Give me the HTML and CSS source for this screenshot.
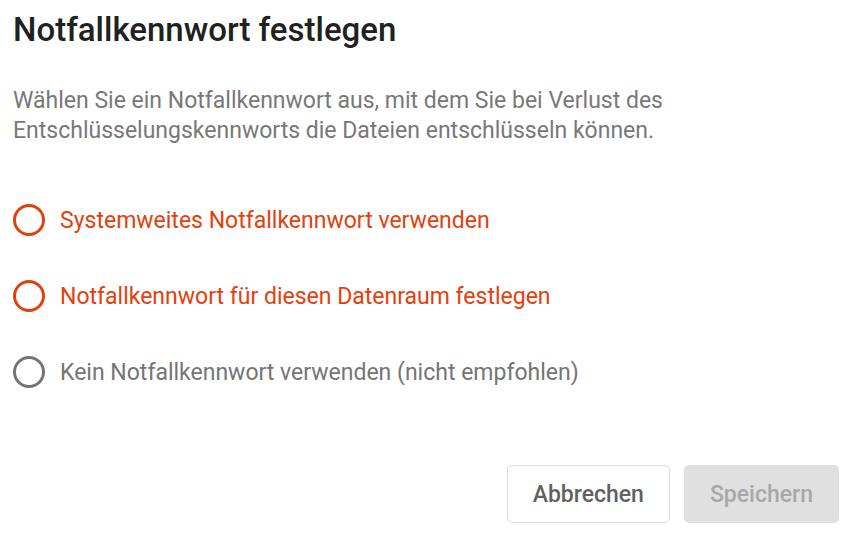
FILE: index.html
```html
<!DOCTYPE html>
<html lang="de">
<head>
    <meta charset="UTF-8">
    <title>Notfallkennwort festlegen</title>
    <link rel="stylesheet" href="styles.css">
</head>
<body>
    <div class="dialog">
        <h1>Notfallkennwort festlegen</h1>
        <p class="intro">Wählen Sie ein Notfallkennwort aus, mit dem Sie bei Verlust des Entschlüsselungskennworts die Dateien entschlüsseln können.</p>

        <div class="options">
            <label class="option active">
                <span class="radio"></span>
                Systemweites Notfallkennwort verwenden
            </label>
            <label class="option active">
                <span class="radio"></span>
                Notfallkennwort für diesen Datenraum festlegen
            </label>
            <label class="option">
                <span class="radio"></span>
                Kein Notfallkennwort verwenden (nicht empfohlen)
            </label>
        </div>

        <div class="actions">
            <button class="btn">Abbrechen</button>
            <button class="btn btn-primary" disabled>Speichern</button>
        </div>
    </div>
</body>
</html>
```

FILE: styles.css
```css
body {
    margin: 0;
    font-family: Roboto, "Liberation Sans", sans-serif;
    background: #fff;
}
.dialog {
    padding: 8px 12px 0 13px;
}
h1 {
    margin: 0;
    font-size: 33px;
    font-weight: 500;
    line-height: 44px;
    color: #212121;
}
.intro {
    margin: 34px 0 0;
    font-size: 23px;
    line-height: 30px;
    color: #787878;
}
.options {
    margin-top: 58px;
    display: flex;
    flex-direction: column;
    gap: 44px;
}
.option {
    display: flex;
    align-items: center;
    gap: 15px;
    height: 32px;
    font-size: 23px;
    color: #757575;
}
.option.active {
    color: #e5400c;
}
.radio {
    width: 26px;
    height: 26px;
    border: 3px solid currentColor;
    border-radius: 50%;
}
.actions {
    margin-top: 77px;
    display: flex;
    justify-content: flex-end;
    gap: 14px;
}
.btn {
    height: 58px;
    padding: 0 25px;
    font-family: inherit;
    font-size: 23px;
    font-weight: 500;
    color: #616161;
    background: #fff;
    border: 1px solid #ddd;
    border-radius: 5px;
}
.btn-primary {
    background: #e0e0e0;
    border-color: #e0e0e0;
    color: #a8a8a8;
}
```
